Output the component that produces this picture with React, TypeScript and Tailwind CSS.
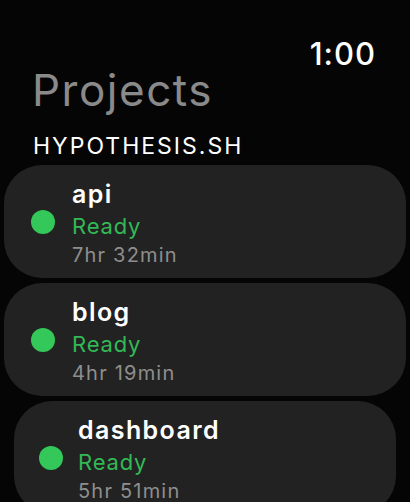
import React from "react";

type P = { name: string; time: string };

function Card({ p, small }: { p: P; small?: boolean }) {
  return (
    <div
      className={
        "shrink-0 flex items-center rounded-[38px] bg-[#222222] h-[113px] " +
        (small ? "mx-[14px] pl-[25px] gap-[15px]" : "mx-[4px] pl-[27px] gap-[17px]")
      }
    >
      <div className="w-[24px] h-[24px] rounded-full bg-[#34c759] shrink-0" />
      <div className="flex flex-col pt-[2px]">
        <div className="text-[25px] leading-[32px] font-semibold text-white tracking-[1.4px]">{p.name}</div>
        <div className="text-[22px] leading-[32px] text-[#32b956] tracking-[0.8px]">Ready</div>
        <div className="text-[20px] leading-[26px] text-[#8e8e8e] tracking-[1.2px]">{p.time}</div>
      </div>
    </div>
  );
}

export default function App() {
  const projects: P[] = [
    { name: "api", time: "7hr 32min" },
    { name: "blog", time: "4hr 19min" },
    { name: "dashboard", time: "5hr 51min" },
  ];
  return (
    <div
      className="w-[410px] h-[502px] bg-[#050505] overflow-hidden flex flex-col"
      style={{ fontFamily: "Inter, 'Noto Sans', sans-serif" }}
    >
      <div className="flex justify-end pr-[34px] pt-[35px] h-[70px]">
        <span className="text-[31px] leading-[38px] font-medium text-white tracking-[1px]">1:00</span>
      </div>
      <div className="pl-[32px] text-[44px] leading-[44px] text-[#8a8a8a] -mt-[2px] tracking-[1.5px]">Projects</div>
      <div className="pl-[33px] mt-[20px] text-[23px] leading-[28px] text-white tracking-[2px]">HYPOTHESIS.SH</div>
      <div className="flex flex-col gap-[5px] mt-[5px]">
        <Card p={projects[0]} />
        <Card p={projects[1]} />
        <Card p={projects[2]} small />
      </div>
    </div>
  );
}
